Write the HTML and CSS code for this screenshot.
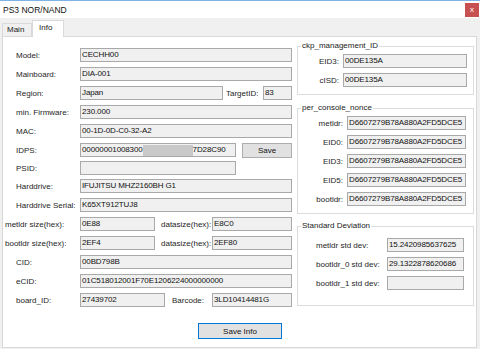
FILE: index.html
```html
<!DOCTYPE html>
<html>
<head>
<meta charset="utf-8">
<link rel="stylesheet" href="styles.css">
</head>
<body>
<div class="window">
  <div class="titlebar">
    <span class="title">PS3 NOR/NAND</span>
    <span class="close">x</span>
  </div>
  <div class="tabs">
    <div class="tab">Main</div>
    <div class="tab active">Info</div>
  </div>
  <div class="panel">
    <div class="left">
      <div class="row"><span class="lbl">Model:</span><span class="box">CECHH00</span></div>
      <div class="row"><span class="lbl">Mainboard:</span><span class="box">DIA-001</span></div>
      <div class="row"><span class="lbl">Region:</span><span class="box w-region">Japan</span><span class="mid-lbl l-target">TargetID:</span><span class="box w-target">83</span></div>
      <div class="row"><span class="lbl">min. Firmware:</span><span class="box">230.000</span></div>
      <div class="row"><span class="lbl">MAC:</span><span class="box">00-1D-0D-C0-32-A2</span></div>
      <div class="row"><span class="lbl">IDPS:</span><span class="box w-idps">00000001008300<span class="redact"></span>7D28C90</span><span class="btn btn-save">Save</span></div>
      <div class="row snug"><span class="lbl">PSID:</span><span class="box w-idps"></span></div>
      <div class="row snug"><span class="lbl">Harddrive:</span><span class="box">IFUJITSU MHZ2160BH G1</span></div>
      <div class="row"><span class="lbl">Harddrive Serial:</span><span class="box">K65XT912TUJ8</span></div>
      <div class="row"><span class="lbl wide">metldr size(hex):</span><span class="box w-size">0E88</span><span class="mid-lbl l-data">datasize(hex):</span><span class="box w-tail">E8C0</span></div>
      <div class="row"><span class="lbl wide">bootldr size(hex):</span><span class="box w-size">2EF4</span><span class="mid-lbl l-data">datasize(hex):</span><span class="box w-tail">2EF80</span></div>
      <div class="row"><span class="lbl">CID:</span><span class="box">00BD798B</span></div>
      <div class="row"><span class="lbl">eCID:</span><span class="box">01C518012001F70E1206224000000000</span></div>
      <div class="row"><span class="lbl">board_ID:</span><span class="box w-board">27439702</span><span class="mid-lbl l-barcode">Barcode:</span><span class="box w-tail">3LD10414481G</span></div>
    </div>
    <div class="right">
      <fieldset class="group g-ckp">
        <legend>ckp_management_ID</legend>
        <div class="grow"><span class="glbl">EID3:</span><span class="box">00DE135A</span></div>
        <div class="grow"><span class="glbl">cISD:</span><span class="box">00DE135A</span></div>
      </fieldset>
      <fieldset class="group g-nonce">
        <legend>per_console_nonce</legend>
        <div class="grow"><span class="glbl">metldr:</span><span class="box">D6607279B78A880A2FD5DCE5</span></div>
        <div class="grow"><span class="glbl">EID0:</span><span class="box">D6607279B78A880A2FD5DCE5</span></div>
        <div class="grow"><span class="glbl">EID3:</span><span class="box">D6607279B78A880A2FD5DCE5</span></div>
        <div class="grow"><span class="glbl">EID5:</span><span class="box">D6607279B78A880A2FD5DCE5</span></div>
        <div class="grow"><span class="glbl">bootldr:</span><span class="box">D6607279B78A880A2FD5DCE5</span></div>
      </fieldset>
      <fieldset class="group g-std">
        <legend>Standard Deviation</legend>
        <div class="grow"><span class="glbl">metldr std dev:</span><span class="box">15.2420985637625</span></div>
        <div class="grow"><span class="glbl">bootldr_0 std dev:</span><span class="box">29.1322878620686</span></div>
        <div class="grow"><span class="glbl">bootldr_1 std dev:</span><span class="box"></span></div>
      </fieldset>
    </div>
    <div class="footer">
      <span class="btn btn-info">Save Info</span>
    </div>
  </div>
</div>
</body>
</html>
```
FILE: styles.css
```css
html, body {
  margin: 0;
  padding: 0;
  background: #f0f0f0;
}
body {
  font-family: "Liberation Sans", Arial, sans-serif;
  font-size: 8px;
  color: #1e1e1e;
}
.window {
  width: 480px;
  height: 349px;
  box-sizing: border-box;
  border-top: 1px solid #7fb2e5;
  background: #f0f0f0;
  display: flex;
  flex-direction: column;
}
.titlebar {
  height: 17px;
  background: #fff;
  display: flex;
  align-items: center;
  justify-content: space-between;
}
.title {
  padding-left: 3px;
  font-size: 8.5px;
  color: #111;
}
.close {
  width: 14px;
  height: 14px;
  margin-right: 1px;
  background: #c75050;
  color: #fff;
  font-size: 8px;
  display: flex;
  align-items: center;
  justify-content: center;
}
.tabs {
  height: 18px;
  display: flex;
  align-items: flex-end;
  padding-left: 2px;
}
.tab {
  box-sizing: border-box;
  height: 13px;
  width: 30px;
  border: 1px solid #d9d9d9;
  border-bottom: none;
  background: #f0f0f0;
  padding-left: 4px;
  line-height: 12px;
  color: #222;
}
.tab.active {
  width: 32px;
  height: 17px;
  margin-bottom: -1px;
  background: #fff;
  position: relative;
  z-index: 1;
  padding-left: 6px;
  line-height: 13px;
}
.panel {
  flex: 1;
  margin: 0 3px 1px 2px;
  border: 1px solid #d9d9d9;
  background: #fff;
  box-sizing: border-box;
  display: grid;
  grid-template-columns: 289px 177px;
  column-gap: 5px;
  align-content: start;
  padding-top: 4px;
}
.left {
  padding-top: 7px;
  display: flex;
  flex-direction: column;
  gap: 5px;
}
.row {
  display: flex;
  align-items: center;
  height: 14px;
}
.row.snug {
  margin-top: -1px;
}
.lbl {
  width: 77px;
  box-sizing: border-box;
  padding-left: 13px;
  white-space: nowrap;
}
.lbl.wide {
  padding-left: 2px;
}
.box {
  box-sizing: border-box;
  height: 14px;
  flex: 1;
  background: #f0f0f0;
  border: 1px solid #a9a9a9;
  padding-left: 1px;
  line-height: 12px;
  white-space: nowrap;
  overflow: hidden;
  display: flex;
  align-items: center;
  color: #111;
  letter-spacing: -0.12px;
}
.row .box.w-region { flex: none; width: 143px; }
.row .box.w-target { flex: none; width: 29px; margin-left: auto; }
.row .box.w-idps { flex: none; width: 156px; }
.row .box.w-size { flex: none; width: 75px; }
.row .box.w-board { flex: none; width: 85px; }
.row .box.w-tail { flex: none; width: 80px; margin-left: auto; }
.mid-lbl { white-space: nowrap; }
.l-target { margin-left: 3px; }
.l-data { margin-left: 6px; }
.l-barcode { margin-left: 7px; }
.redact {
  display: inline-block;
  width: 50px;
  height: 11px;
  background: #c9c9c9;
}
.btn {
  box-sizing: border-box;
  display: flex;
  align-items: center;
  justify-content: center;
  background: #e1e1e1;
  border: 1px solid #adadad;
  color: #111;
}
.btn-save {
  width: 50px;
  height: 15px;
  margin-left: auto;
}
.right {
  display: flex;
  flex-direction: column;
}
.group {
  margin: 0;
  padding: 0 0 7px 0;
  border: 1px solid #dcdcdc;
  display: flex;
  flex-direction: column;
  gap: 5px;
}
.group legend {
  margin-left: 3px;
  padding: 0 1px;
  line-height: 10px;
  color: #222;
}
.grow {
  display: flex;
  align-items: center;
  height: 14px;
}
.grow:first-of-type { margin-top: 3px; }
.glbl {
  box-sizing: border-box;
  text-align: right;
  white-space: nowrap;
}
.g-ckp .glbl { width: 41px; margin-right: 4px; }
.g-ckp .box { flex: none; width: 124px; }
.g-nonce { margin-top: 8px; }
.g-nonce .glbl { width: 45px; margin-right: 4px; }
.g-nonce .box { flex: none; width: 119px; }
.g-std { margin-top: 7px; padding-bottom: 15px; }
.g-std .grow:first-of-type { margin-top: 7px; }
.g-std .glbl { width: 89px; text-align: left; padding-left: 18px; }
.g-std .box { flex: none; width: 77px; }
.footer {
  grid-column: 1 / -1;
  display: flex;
  justify-content: center;
  margin-top: 16px;
  padding-left: 3px;
}
.btn-info {
  width: 84px;
  height: 16px;
  border-color: #0078d7;
}
```
